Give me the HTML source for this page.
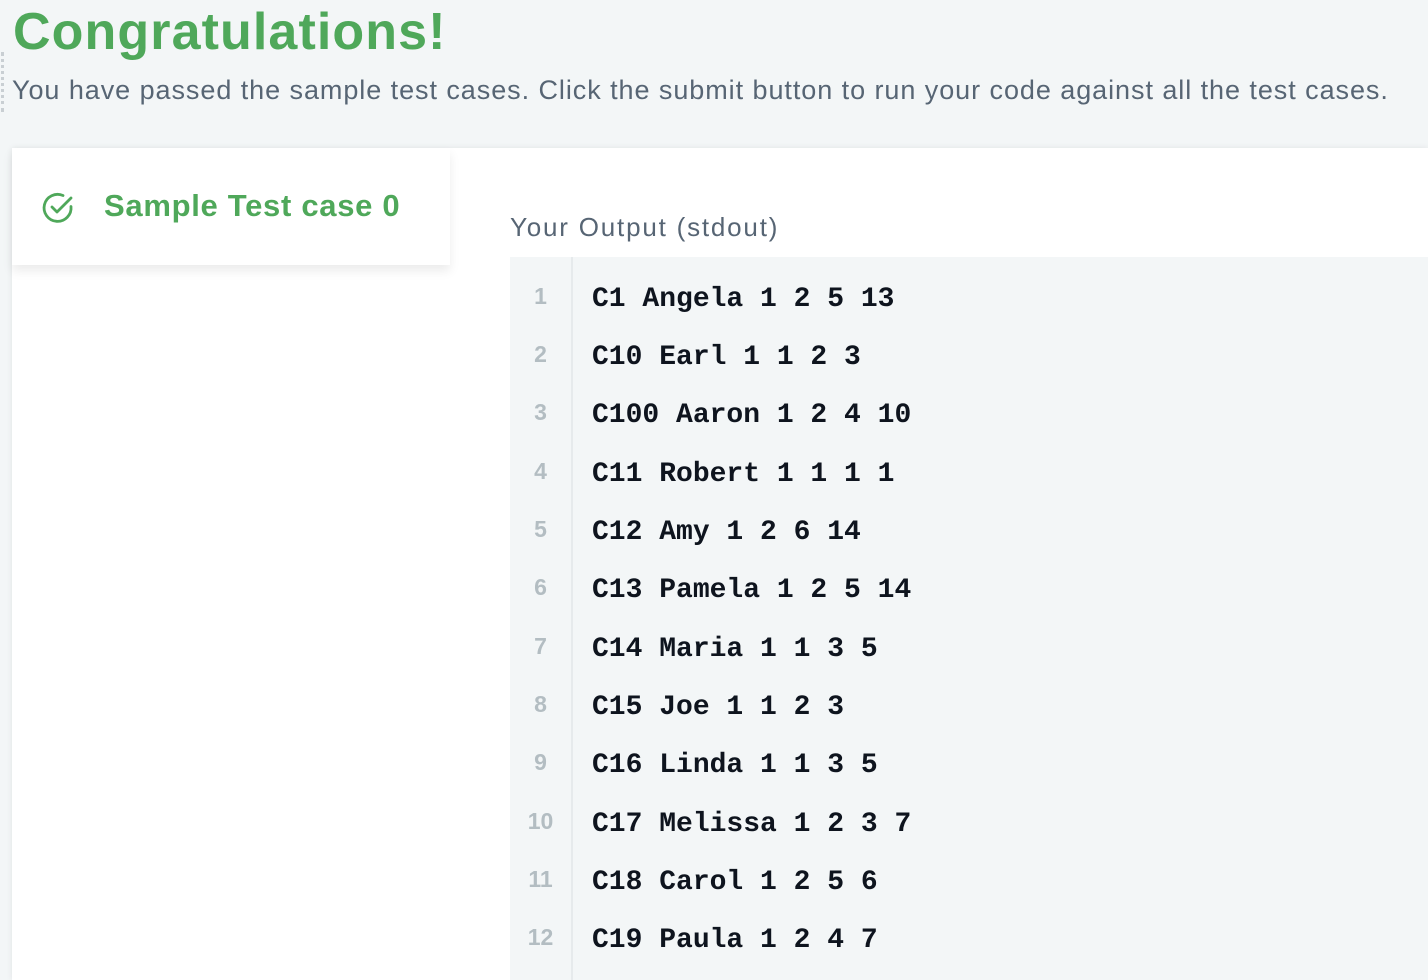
<!DOCTYPE html>
<html><head><style>
body{margin:0;width:1428px;height:980px;background:#f3f6f7;font-family:"Liberation Sans",sans-serif;overflow:hidden;position:relative}
h1{position:absolute;left:13px;top:2px;margin:0;font-size:52px;font-weight:bold;color:#4fa85a;letter-spacing:1.1px}
.sub{position:absolute;left:12px;top:75px;font-size:27px;color:#576574;white-space:nowrap;letter-spacing:0.94px}
.dots{position:absolute;left:1px;top:52px;height:60px;border-left:3px dotted #c9cfd3}
.card{position:absolute;left:12px;top:148px;right:0;bottom:0;background:#fff;box-shadow:0 0 6px rgba(0,0,0,0.08)}
.tab{position:absolute;left:12px;top:148px;width:438px;height:117px;background:#fff;box-shadow:0 6px 10px rgba(0,0,0,0.08)}
.tab span{position:absolute;left:92px;top:40px;font-size:31px;font-weight:bold;color:#4fa85a;letter-spacing:0.7px}
.tab svg{position:absolute;left:29px;top:42px}
.lbl{position:absolute;left:510px;top:212px;font-size:26px;color:#576574;letter-spacing:1.8px}
.code{position:absolute;left:510px;top:257px;right:0;bottom:0;background:#f3f6f7}
.gut{position:absolute;left:0;top:0;width:61px;bottom:0;border-right:2px solid #e6eaec}
.ln{position:absolute;width:61px;text-align:center;font-size:23px;color:#b3bdc2;font-family:"Liberation Sans",sans-serif;font-weight:bold}
.tx{position:absolute;left:82px;font-family:"Liberation Mono",monospace;font-weight:bold;font-size:28px;color:#0e141e;white-space:pre}
</style></head><body>
<h1>Congratulations!</h1>
<div class="dots"></div>
<div class="sub">You have passed the sample test cases. Click the submit button to run your code against all the test cases.</div>
<div class="card"></div>
<div class="tab"><svg width="36" height="36" viewBox="0 0 36 36"><path d="M30 16.5A13.5 13.5 0 1 1 22 5.5" fill="none" stroke="#4fa85a" stroke-width="2.8" stroke-linecap="round"/><path d="M11 17l5 5L30 8" fill="none" stroke="#4fa85a" stroke-width="2.8" stroke-linecap="round" stroke-linejoin="round"/></svg><span>Sample Test case 0</span></div>
<div class="lbl">Your Output (stdout)</div>
<div class="code"><div class="gut"></div>
<div class="ln" style="top:26px">1</div><div class="tx" style="top:27px">C1 Angela 1 2 5 13</div>
<div class="ln" style="top:84px">2</div><div class="tx" style="top:85px">C10 Earl 1 1 2 3</div>
<div class="ln" style="top:142px">3</div><div class="tx" style="top:143px">C100 Aaron 1 2 4 10</div>
<div class="ln" style="top:201px">4</div><div class="tx" style="top:202px">C11 Robert 1 1 1 1</div>
<div class="ln" style="top:259px">5</div><div class="tx" style="top:260px">C12 Amy 1 2 6 14</div>
<div class="ln" style="top:317px">6</div><div class="tx" style="top:318px">C13 Pamela 1 2 5 14</div>
<div class="ln" style="top:376px">7</div><div class="tx" style="top:377px">C14 Maria 1 1 3 5</div>
<div class="ln" style="top:434px">8</div><div class="tx" style="top:435px">C15 Joe 1 1 2 3</div>
<div class="ln" style="top:492px">9</div><div class="tx" style="top:493px">C16 Linda 1 1 3 5</div>
<div class="ln" style="top:551px">10</div><div class="tx" style="top:552px">C17 Melissa 1 2 3 7</div>
<div class="ln" style="top:609px">11</div><div class="tx" style="top:610px">C18 Carol 1 2 5 6</div>
<div class="ln" style="top:667px">12</div><div class="tx" style="top:668px">C19 Paula 1 2 4 7</div>
</div>
</body></html>
